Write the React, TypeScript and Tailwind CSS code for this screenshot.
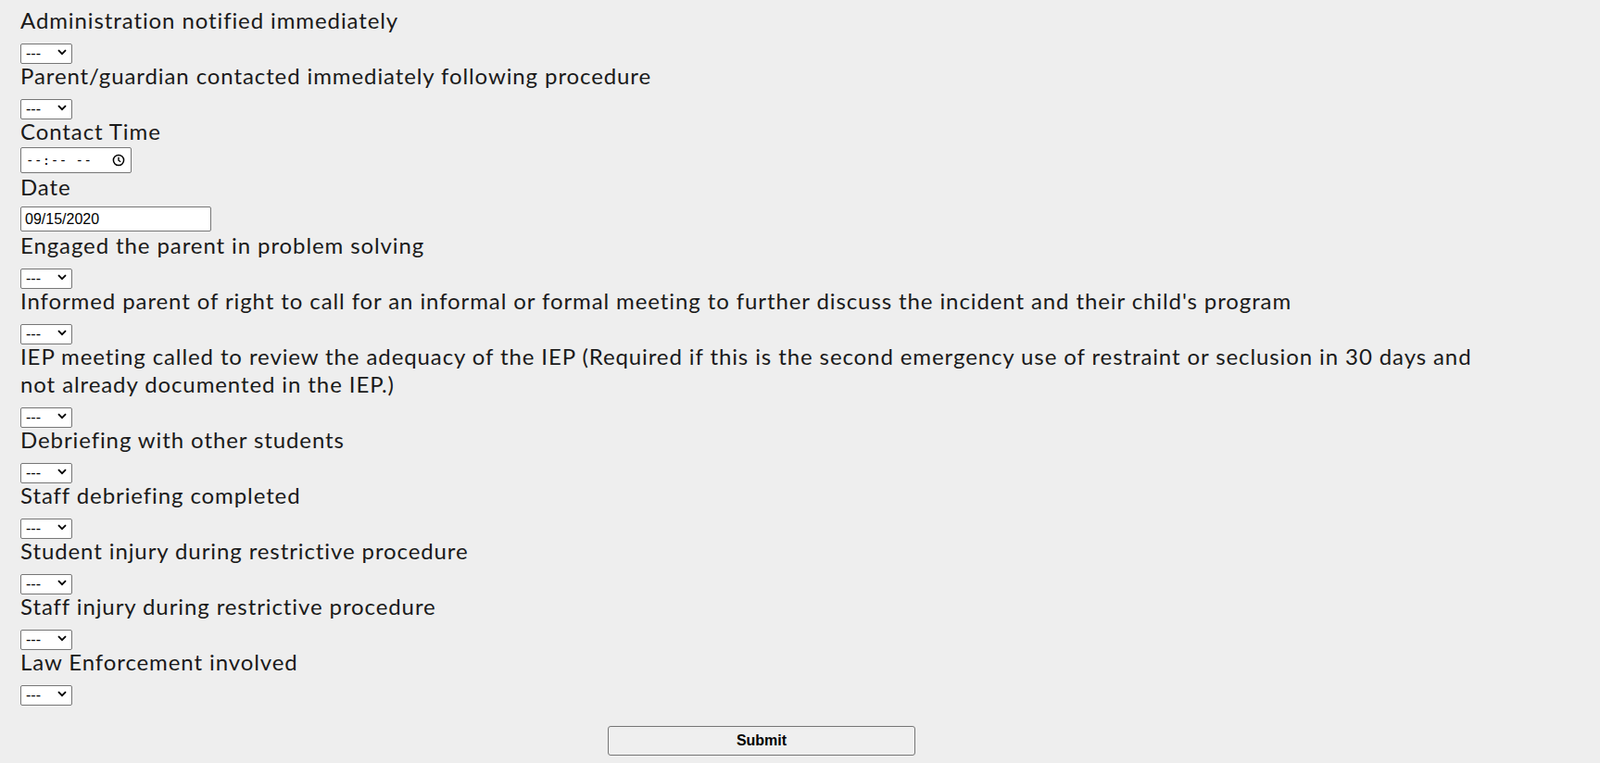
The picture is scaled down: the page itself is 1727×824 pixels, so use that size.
import React from 'react';

type Field = { label: string; kind: 'select' | 'time' | 'date' };

const fields: Field[] = [
  { label: 'Administration notified immediately', kind: 'select' },
  { label: 'Parent/guardian contacted immediately following procedure', kind: 'select' },
  { label: 'Contact Time', kind: 'time' },
  { label: 'Date', kind: 'date' },
  { label: 'Engaged the parent in problem solving', kind: 'select' },
  {
    label:
      "Informed parent of right to call for an informal or formal meeting to further discuss the incident and their child's program",
    kind: 'select',
  },
  {
    label:
      'IEP meeting called to review the adequacy of the IEP (Required if this is the second emergency use of restraint or seclusion in 30 days and not already documented in the IEP.)',
    kind: 'select',
  },
  { label: 'Debriefing with other students', kind: 'select' },
  { label: 'Staff debriefing completed', kind: 'select' },
  { label: 'Student injury during restrictive procedure', kind: 'select' },
  { label: 'Staff injury during restrictive procedure', kind: 'select' },
  { label: 'Law Enforcement involved', kind: 'select' },
];

const Dropdown = () => (
  <div className="relative mt-[8px] h-[22px] w-[56px]">
    <select className="h-full w-full appearance-none rounded-[2px] border border-[#767676] bg-white pl-[5px] font-['Liberation_Sans',Arial,sans-serif] text-[16px] leading-[20px] tracking-normal text-black">
      <option>---</option>
      <option>Yes</option>
      <option>No</option>
    </select>
    <svg
      className="pointer-events-none absolute right-[6px] top-[8px]"
      width="10"
      height="7"
      viewBox="0 0 10 7"
      fill="none"
    >
      <path d="M1 1.2l4 4 4-4" stroke="#000" strokeWidth="1.8" />
    </svg>
  </div>
);

const TimeBox = () => (
  <div className="mt-[2px] flex h-[28px] w-[120px] items-center justify-between rounded-[2px] border border-[#767676] bg-white pl-[5px] pr-[6px] font-['DejaVu_Sans_Mono',monospace] text-[14px] tracking-[0.5px] text-black">
    <span>--:-- --</span>
    <svg width="14" height="14" viewBox="0 0 14 14" fill="none">
      <circle cx="7" cy="7" r="5.6" stroke="#000" strokeWidth="1.5" />
      <path d="M7 3.8V7.2l2.2 1.6" stroke="#000" strokeWidth="1.4" />
    </svg>
  </div>
);

const DateBox = () => (
  <input
    type="text"
    readOnly
    defaultValue="09/15/2020"
    className="mt-[6px] block h-[27px] w-[206px] rounded-[2px] border border-[#767676] bg-white px-[4px] font-['Liberation_Sans',Arial,sans-serif] text-[16px] tracking-normal text-black"
  />
);

export default function App() {
  return (
    <div className="min-h-screen w-full bg-[#eeeeee] pl-[22px] pt-[7px] font-['Lato',sans-serif] text-[#1a1a1a]">
      <div className="w-[1600px]">
        {fields.map((f) => (
          <div key={f.label}>
            <div className="text-[24px] leading-[30px] tracking-[0.9px]">{f.label}</div>
            {f.kind === 'select' && <Dropdown />}
            {f.kind === 'time' && <TimeBox />}
            {f.kind === 'date' && <DateBox />}
          </div>
        ))}
        <button className="mx-auto mt-[24px] block h-[32px] w-[332px] rounded-[3px] border border-[#767676] bg-[#efefef] font-['Liberation_Sans',Arial,sans-serif] text-[16px] font-bold text-black">
          Submit
        </button>
      </div>
    </div>
  );
}
